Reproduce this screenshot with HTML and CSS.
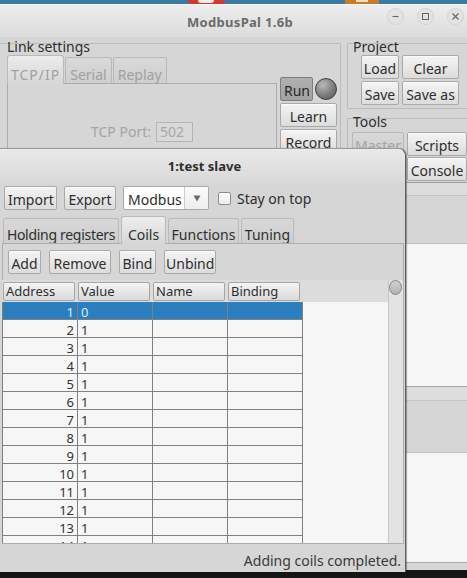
FILE: index.html
```html
<!DOCTYPE html>
<html>
<head>
<meta charset="utf-8">
<link rel="stylesheet" href="styles.css">
</head>
<body>
<div class="desktop">
  <div class="panelbar"><span class="logo-red"></span><span class="logo-orange"></span></div>

  <div class="win mainwin">
    <div class="titlebar">
      <div class="tb-spacer"></div>
      <div class="title">ModbusPal 1.6b</div>
      <div class="controls">
        <span class="ctl"><svg width="9" height="9" viewBox="0 0 9 9"><path d="M1.5 4.5H7.5" stroke="#666" stroke-width="1.1"/></svg></span>
        <span class="ctl"><svg width="9" height="9" viewBox="0 0 9 9"><rect x="1.5" y="1.5" width="6" height="6" fill="none" stroke="#666" stroke-width="1"/></svg></span>
        <span class="ctl"><svg width="9" height="9" viewBox="0 0 9 9"><path d="M1.5 1.5L7.5 7.5M7.5 1.5L1.5 7.5" stroke="#666" stroke-width="1.1"/></svg></span>
      </div>
    </div>

    <div class="main-top">
      <div class="linkset">
        <div class="gtitle g7">Link settings</div>
        <div class="link-row">
          <div class="tabwrap">
            <div class="tabs">
              <div class="tab sel tcp">TCP/IP</div>
              <div class="tab">Serial</div>
              <div class="tab">Replay</div>
            </div>
            <div class="tabpanel">
              <div class="portrow"><span class="dim">TCP Port:</span><span class="input">502</span></div>
            </div>
          </div>
          <div class="btncol">
            <div class="runrow"><button class="btn run">Run</button><span class="led"></span></div>
            <button class="btn">Learn</button>
            <button class="btn">Record</button>
          </div>
        </div>
      </div>

      <div class="rightcol">
        <div class="project">
          <div class="gtitle g5">Project</div>
          <div class="pgrid">
            <button class="btn">Load</button>
            <button class="btn">Clear</button>
            <button class="btn">Save</button>
            <button class="btn">Save as</button>
          </div>
        </div>
        <div class="tools">
          <div class="gtitle g5">Tools</div>
          <div class="tgrid">
            <button class="btn disabled">Master</button>
            <button class="btn">Scripts</button>
            <span></span>
            <button class="btn">Console</button>
          </div>
        </div>
      </div>
    </div>

    <div class="bands">
      <div class="bd l1"></div>
      <div class="bd lt"></div>
      <div class="bd l2"></div>
      <div class="bd g1"></div>
      <div class="bd l3"></div>
      <div class="bd wh1"></div>
      <div class="bd l4"></div>
      <div class="bd lt2"></div>
      <div class="bd l2"></div>
      <div class="bd g2"></div>
      <div class="bd l3"></div>
      <div class="bd wh2"></div>
      <div class="bd l4"></div>
    </div>
  </div>

  <div class="win slave">
    <div class="stitle">1:test slave</div>
    <div class="toolbar">
      <button class="btn w-import">Import</button>
      <button class="btn w-export">Export</button>
      <div class="combo">
        <div class="combo-text">Modbus</div>
        <div class="combo-arrow"><svg width="8" height="7" viewBox="0 0 8 7"><path d="M0.5 0.5H7.5L4 6.5Z" fill="#6a6a6a"/></svg></div>
      </div>
      <div class="chk-wrap"><span class="chk"></span><span class="chk-label">Stay on top</span></div>
    </div>

    <div class="stabs">
      <div class="stab w-hold">Holding registers</div>
      <div class="stab sel w-coils">Coils</div>
      <div class="stab w-func">Functions</div>
      <div class="stab w-tun">Tuning</div>
    </div>

    <div class="spanel">
      <div class="brow">
        <button class="btn w-add">Add</button>
        <button class="btn w-remove">Remove</button>
        <button class="btn w-bind">Bind</button>
        <button class="btn w-unbind">Unbind</button>
      </div>
      <div class="pane">
        <div class="tarea">
          <div class="thead">
            <div class="th">Address</div>
            <div class="th">Value</div>
            <div class="th">Name</div>
            <div class="th">Binding</div>
          </div>
          <div class="tbody">
            <div class="row selrow"><div class="c addr">1</div><div class="c val">0</div><div class="c"></div><div class="c"></div></div>
            <div class="row"><div class="c addr">2</div><div class="c val">1</div><div class="c"></div><div class="c"></div></div>
            <div class="row"><div class="c addr">3</div><div class="c val">1</div><div class="c"></div><div class="c"></div></div>
            <div class="row"><div class="c addr">4</div><div class="c val">1</div><div class="c"></div><div class="c"></div></div>
            <div class="row"><div class="c addr">5</div><div class="c val">1</div><div class="c"></div><div class="c"></div></div>
            <div class="row"><div class="c addr">6</div><div class="c val">1</div><div class="c"></div><div class="c"></div></div>
            <div class="row"><div class="c addr">7</div><div class="c val">1</div><div class="c"></div><div class="c"></div></div>
            <div class="row"><div class="c addr">8</div><div class="c val">1</div><div class="c"></div><div class="c"></div></div>
            <div class="row"><div class="c addr">9</div><div class="c val">1</div><div class="c"></div><div class="c"></div></div>
            <div class="row"><div class="c addr">10</div><div class="c val">1</div><div class="c"></div><div class="c"></div></div>
            <div class="row"><div class="c addr">11</div><div class="c val">1</div><div class="c"></div><div class="c"></div></div>
            <div class="row"><div class="c addr">12</div><div class="c val">1</div><div class="c"></div><div class="c"></div></div>
            <div class="row"><div class="c addr">13</div><div class="c val">1</div><div class="c"></div><div class="c"></div></div>
            <div class="row"><div class="c addr">14</div><div class="c val">1</div><div class="c"></div><div class="c"></div></div>
          </div>
        </div>
        <div class="sbar"><span class="thumb"></span></div>
      </div>
    </div>

    <div class="status">Adding coils completed.</div>
  </div>
</div>
</body>
</html>
```

FILE: styles.css
```css
* { box-sizing: border-box; margin: 0; padding: 0; }

body {
  width: 467px;
  height: 578px;
  overflow: hidden;
  background: #151515;
  font-family: "Noto Sans", "DejaVu Sans", sans-serif;
  font-size: 14px;
  color: #2e2e2e;
}

.desktop { position: relative; width: 467px; height: 578px; overflow: hidden; }

.panelbar { position: relative; height: 4px; background: #3b7aa2; }
.logo-red { position: absolute; left: 188px; top: 0; width: 37px; height: 4px; background: #d23a2f; border-radius: 0 0 10px 10px; }
.logo-red::after { content: ""; position: absolute; left: 10px; top: 0; width: 16px; height: 3px; background: #f3ecea; border-radius: 0 0 6px 6px; }
.logo-orange { position: absolute; left: 345px; top: 0; width: 34px; height: 5px; background: #c97a2d; }
.logo-orange::after { content: ""; position: absolute; left: 11px; top: 0; width: 12px; height: 2px; background: #f2dcc0; }

.win { position: absolute; left: 0; background: #d6d6d6; }

/* ---------- main window ---------- */
.mainwin { top: 4px; width: 467px; height: 566px; display: flex; flex-direction: column; }

.titlebar {
  flex: none;
  height: 33px;
  display: grid;
  grid-template-columns: 1fr auto 1fr;
  padding-left: 13px;
  border-top: 1px solid #f6f6f6;
  background: linear-gradient(#ededed, #dcdcdc);
}
.title { grid-column: 2; line-height: 32px; padding-top: 1px; font-size: 13px; font-weight: bold; color: #6b6b6b; letter-spacing: 0.3px; }
.controls { grid-column: 3; justify-self: end; align-self: start; display: flex; gap: 13px; padding-right: 3px; margin-top: 3px; }
.ctl { width: 17px; height: 17px; border-radius: 50%; background: #e3e3e3; border: 1px solid #d3d3d3; display: flex; align-items: center; justify-content: center; }

.btn {
  display: block;
  font: inherit;
  color: #2e2e2e;
  height: 24px;
  padding: 4px 3px 0;
  line-height: 18px;
  border: 1px solid #a9a9a9;
  border-radius: 2px;
  background: linear-gradient(#f4f4f4, #dcdcdc);
  box-shadow: inset 0 1px 0 #fbfbfb;
  text-align: center;
  white-space: nowrap;
  overflow: hidden;
}
.btn.run { width: 33px; background: linear-gradient(#b0b0b0, #a2a2a2); border-color: #7e7e7e; box-shadow: none; color: #262626; }
.btn.disabled { color: #a3a3a3; background: linear-gradient(#d8d8d8, #cdcdcd); border-color: #b8b8b8; box-shadow: none; }

.w-import { width: 53px; }
.w-export { width: 52px; }
.w-add { width: 33px; padding-left: 1px; padding-right: 1px; }
.w-remove { width: 62px; padding-left: 1px; padding-right: 1px; }
.w-bind { width: 37px; padding-left: 1px; padding-right: 1px; }
.w-unbind { width: 52px; padding-left: 1px; padding-right: 1px; }

.main-top { flex: none; height: 145px; display: grid; grid-template-columns: 347px 120px; overflow: hidden; }

.linkset { margin-top: 6px; width: 341px; height: 200px; border-top: 1px solid #bcbcbc; border-right: 1px solid #bcbcbc; }
.gtitle { margin-top: -5px; line-height: 16px; color: #2e2e2e; }
.g7 { padding-left: 7px; }
.g5 { padding-left: 5px; }

.link-row { display: flex; align-items: flex-start; }
.tabwrap { flex: none; width: 270px; margin-left: 7px; }
.tabs { display: flex; align-items: flex-end; gap: 1px; height: 28px; }
.tab {
  height: 26px;
  padding: 8px 4px 0;
  line-height: 17px;
  border: 1px solid #b9b9b9;
  border-bottom: none;
  border-radius: 3px 3px 0 0;
  background: linear-gradient(#d9d9d9, #cfcfcf);
  color: #a0a0a0;
}
.tab.sel { position: relative; z-index: 1; height: 29px; margin-bottom: -1px; padding-top: 10px; background: linear-gradient(#ececec, #d6d6d6); }
.tab.tcp { padding-left: 3px; padding-right: 3px; letter-spacing: 1px; }
.tabpanel { height: 120px; border: 1px solid #acacac; background: #d6d6d6; }
.portrow { margin-top: 38px; display: flex; justify-content: center; align-items: center; gap: 5px; line-height: 18px; }
.dim { color: #a4a4a4; }
.input { width: 37px; height: 20px; border: 1px solid #b4b4b4; background: #d9d9d9; color: #a8a8a8; padding-left: 3px; }

.btncol { flex: none; width: 57px; margin-left: 3px; padding-top: 22px; display: flex; flex-direction: column; gap: 2px; }
.runrow { display: flex; align-items: center; gap: 2px; }
.led { width: 22px; height: 22px; border-radius: 50%; border: 1px solid #3f3f3f; background: radial-gradient(circle at 35% 30%, #b9b9b9, #777 60%, #555); }

.rightcol { display: flex; flex-direction: column; }
.project { margin-top: 6px; height: 66px; border: 1px solid #bcbcbc; border-right: none; }
.pgrid { display: grid; grid-template-columns: 38px 57px; column-gap: 3px; row-gap: 2px; margin-left: 13px; }
.pgrid .btn, .tgrid .btn { width: 100%; padding-left: 1px; padding-right: 1px; }
.tools { margin-top: 9px; flex: 1; border-top: 1px solid #bcbcbc; border-left: 1px solid #bcbcbc; }
.tgrid { display: grid; grid-template-columns: 52px 60px; column-gap: 3px; row-gap: 1px; margin: 2px 0 0 4px; }

.bands { flex: 1; display: flex; flex-direction: column; }
.bd { flex: none; }
.l1 { height: 1px; background: #9d9d9d; }
.lt { height: 12px; background: #dddddd; }
.l2 { height: 1px; background: #c3c3c3; }
.g1 { height: 47px; }
.l3 { height: 1px; background: #bdbdbd; }
.wh1 { height: 142px; background: #f6f6f6; }
.l4 { height: 1px; background: #a7a7a7; }
.lt2 { height: 13px; background: #dddddd; }
.g2 { height: 51px; }
.wh2 { height: 109px; background: #f6f6f6; }

/* ---------- slave window ---------- */
.slave {
  top: 148px;
  width: 406px;
  height: 424px;
  border-top: 1px solid #9b9b9b;
  border-right: 1px solid #5f5f5f;
  border-top-right-radius: 8px;
  box-shadow: 1px 0 1px rgba(0, 0, 0, 0.35);
  display: flex;
  flex-direction: column;
  overflow: hidden;
}
.stitle { flex: none; height: 34px; line-height: 34px; padding-left: 4px; text-align: center; font-size: 13px; font-weight: bold; color: #2e2e2e; background: linear-gradient(#e9e9e9, #d9d9d9); }

.toolbar { flex: none; display: flex; align-items: center; gap: 7px; height: 24px; margin-top: 3px; padding-left: 4px; }
.combo { width: 86px; height: 24px; border: 1px solid #a8a8a8; border-radius: 2px; background: #fff; display: flex; }
.combo-text { width: 60px; padding: 4px 0 0 4px; line-height: 18px; }
.combo-arrow { flex: 1; border-left: 1px solid #cdcdcd; display: flex; align-items: center; justify-content: center; background: linear-gradient(#fbfbfb, #eeeeee); }
.chk-wrap { display: flex; align-items: center; gap: 6px; margin-left: 2px; }
.chk { width: 13px; height: 13px; border: 1px solid #8d8d8d; border-radius: 2px; background: linear-gradient(#ffffff, #ebebeb); }
.chk-label { height: 24px; padding-top: 4px; line-height: 18px; }

.stabs { flex: none; display: flex; align-items: flex-end; gap: 2px; height: 27px; margin-top: 6px; padding-left: 3px; }
.stab {
  height: 25px;
  padding: 7px 0 0;
  line-height: 17px;
  border: 1px solid #bababa;
  border-bottom: none;
  border-radius: 3px 3px 0 0;
  background: linear-gradient(#d8d8d8, #cecece);
  color: #2e2e2e;
  text-align: center;
  white-space: nowrap;
  overflow: hidden;
}
.stab.sel { position: relative; z-index: 1; height: 28px; margin-bottom: -1px; padding-top: 9px; background: linear-gradient(#eeeeee, #d6d6d6); }
.w-hold { width: 116px; letter-spacing: -0.3px; }
.w-coils { width: 45px; }
.w-func { width: 71px; }
.w-tun { width: 53px; }

.spanel { flex: none; width: 402px; height: 301px; margin-left: 2px; border: 1px solid #adadad; padding: 6px 0 0 5px; }
.brow { display: flex; gap: 8px; }
.pane { display: flex; height: 263px; margin: 6px 0 0 -6px; }
.tarea { flex: 1; overflow: hidden; background: #f6f6f6; }
.thead { display: grid; grid-template-columns: repeat(4, 75px); height: 22px; background: #dcdcdc; }
.th {
  margin: 2px 2px 1px 1px;
  height: 19px;
  padding-left: 2px;
  line-height: 17px;
  font-size: 13px;
  border: 1px solid #a5a5a5;
  border-radius: 2px;
  background: linear-gradient(#f5f5f5, #dadada);
  color: #2e2e2e;
}
.row { display: grid; grid-template-columns: repeat(4, 75px); width: 301px; border-left: 1px solid #808080; }
.c { height: 18px; border-right: 1px solid #808080; border-bottom: 1px solid #808080; line-height: 20px; font-size: 13px; overflow: hidden; color: #333; }
.addr { text-align: right; padding-right: 3px; }
.val { padding-left: 3px; }
.selrow .c { background: #2b7fbf; color: #d8ecfa; }
.sbar { flex: none; width: 15px; background: #e3e3e3; border-left: 1px solid #c7c7c7; }
.thumb { display: block; width: 13px; height: 15px; border-radius: 50%; border: 1px solid #8f8f8f; background: linear-gradient(#d2d2d2, #b3b3b3); }

.status { flex: 1; text-align: right; padding: 9px 4px 0 0; line-height: 16px; color: #3a3a3a; }
```
